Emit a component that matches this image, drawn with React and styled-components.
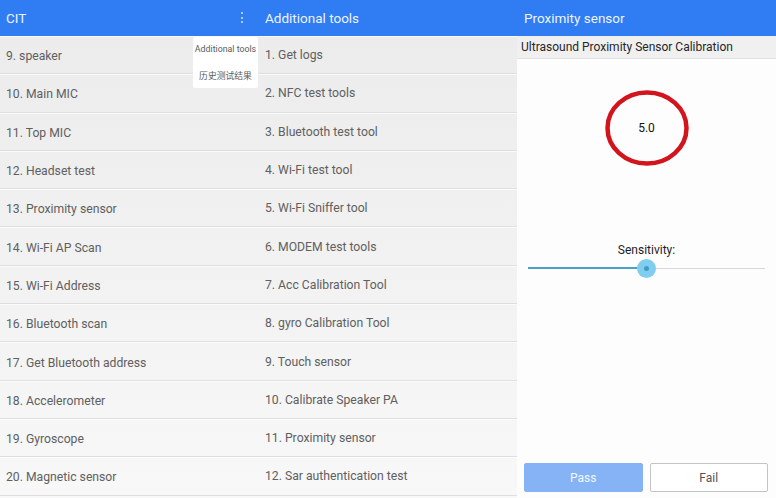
import React from "react";
import styled, { createGlobalStyle } from "styled-components";

const Global = createGlobalStyle`
  html, body { margin: 0; padding: 0; background: #ffffff; }
  body { font-family: Roboto, "Noto Sans", "Noto Sans CJK SC", sans-serif; }
  * { box-sizing: border-box; }
`;

const Screen = styled.div`
  display: flex;
  width: 776px;
  height: 498px;
  overflow: hidden;
`;

const Panel = styled.div`
  position: relative;
  display: flex;
  flex-direction: column;
  width: ${(p) => p.$w}px;
  flex: none;
  background: ${(p) => p.$bg || "#fff"};
`;

const Header = styled.div`
  height: 36px;
  flex: none;
  display: flex;
  align-items: center;
  justify-content: space-between;
  padding: 0 ${(p) => p.$pr || 0}px 1px ${(p) => p.$pl}px;
  background: #2f7cf3;
  color: #eef4ff;
  font-size: 13.5px;
`;

const Dots = styled.div`
  display: flex;
  flex-direction: column;
  gap: 2.5px;
  span {
    width: 2px;
    height: 2px;
    border-radius: 1px;
    background: #d6e4ff;
  }
`;

const List = styled.div`
  flex: 1;
  display: flex;
  flex-direction: column;
  background: linear-gradient(#ececec, #f3f3f3 60%, #f8f8f8);
`;

const Row = styled.div`
  height: 38.3px;
  flex: none;
  display: flex;
  align-items: center;
  padding: ${(p) => (p.$shift ? 1 : 3)}px 0 0 6px;
  font-size: 12.2px;
  color: #606060;
  border-bottom: 1px solid #dfdfdf;
  box-shadow: inset 0 1px 0 rgba(255, 255, 255, 0.7);
`;

const Menu = styled.div`
  position: absolute;
  top: 37px;
  right: 1px;
  width: 65px;
  height: 51px;
  background: #ffffff;
  border-radius: 2px;
  display: flex;
  flex-direction: column;
  justify-content: space-between;
  align-items: center;
  padding: 7px 0 6px;
  font-size: 8.8px;
  color: #5a5a5a;
  font-family: Roboto, "Noto Sans CJK SC", sans-serif;
  white-space: nowrap;
`;

const SubHeader = styled.div`
  height: 23px;
  flex: none;
  display: flex;
  align-items: center;
  padding-left: 4px;
  background: #f0f0f0;
  border-bottom: 1px solid #e2e2e2;
  font-size: 12px;
  color: #262626;
`;

const Content = styled.div`
  flex: 1;
  display: flex;
  flex-direction: column;
  align-items: center;
  background: #fdfdfd;
`;

const ValueBox = styled.div`
  position: relative;
  margin-top: 31px;
  width: 84px;
  height: 76px;
  display: flex;
  align-items: center;
  justify-content: center;
  font-size: 12px;
  color: #111;
  svg {
    position: absolute;
    inset: 0;
  }
`;

const Label = styled.div`
  margin-top: 77px;
  font-size: 12px;
  color: #1e1e1e;
`;

const SliderWrap = styled.div`
  position: relative;
  align-self: stretch;
  margin: 1px 11px 0;
  height: 20px;
`;

const Track = styled.div`
  position: absolute;
  left: 0;
  right: 0;
  top: 9.5px;
  height: 1px;
  background: #d8d8d8;
`;

const Fill = styled.div`
  position: absolute;
  left: 0;
  top: 9px;
  height: 2px;
  background: #4aa3c6;
`;

const Thumb = styled.div`
  position: absolute;
  top: 0.5px;
  width: 19px;
  height: 19px;
  margin-left: -9.5px;
  border-radius: 50%;
  background: #80cdf0;
  display: flex;
  align-items: center;
  justify-content: center;
  &::after {
    content: "";
    width: 5px;
    height: 5px;
    border-radius: 50%;
    background: #3f9cc4;
  }
`;

const Spacer = styled.div`
  flex: 1;
`;

const Buttons = styled.div`
  align-self: stretch;
  display: flex;
  gap: 7px;
  padding: 0 8px 6px 7px;
`;

const Button = styled.div`
  flex: 1;
  height: 29px;
  display: flex;
  align-items: center;
  justify-content: center;
  padding-top: 1px;
  border-radius: 2px;
  font-size: 12px;
  background: ${(p) => (p.$primary ? "#86b2f6" : "#ffffff")};
  color: ${(p) => (p.$primary ? "#f4f8ff" : "#555")};
  border: 1px solid ${(p) => (p.$primary ? "#86b2f6" : "#c4c4c4")};
`;

const leftItems = [
  "9. speaker",
  "10. Main MIC",
  "11. Top MIC",
  "12. Headset test",
  "13. Proximity sensor",
  "14. Wi-Fi AP Scan",
  "15. Wi-Fi Address",
  "16. Bluetooth scan",
  "17. Get Bluetooth address",
  "18. Accelerometer",
  "19. Gyroscope",
  "20. Magnetic sensor",
];

const midItems = [
  "1. Get logs",
  "2. NFC test tools",
  "3. Bluetooth test tool",
  "4. Wi-Fi test tool",
  "5. Wi-Fi Sniffer tool",
  "6. MODEM test tools",
  "7. Acc Calibration Tool",
  "8. gyro Calibration Tool",
  "9. Touch sensor",
  "10. Calibrate Speaker PA",
  "11. Proximity sensor",
  "12. Sar authentication test",
];

export default function App() {
  const sensitivity = 0.5;
  return (
    <>
      <Global />
      <Screen>
        <Panel $w={259}>
          <Header $pl={6} $pr={16}>
            <span>CIT</span>
            <Dots>
              <span />
              <span />
              <span />
            </Dots>
          </Header>
          <List>
            {leftItems.map((t) => (
              <Row key={t}>{t}</Row>
            ))}
          </List>
          <Menu>
            <span>Additional tools</span>
            <span>历史测试结果</span>
          </Menu>
        </Panel>
        <Panel $w={258}>
          <Header $pl={6}>
            <span>Additional tools</span>
          </Header>
          <List>
            {midItems.map((t) => (
              <Row key={t} $shift>
                {t}
              </Row>
            ))}
          </List>
        </Panel>
        <Panel $w={259}>
          <Header $pl={7}>
            <span>Proximity sensor</span>
          </Header>
          <SubHeader>Ultrasound Proximity Sensor Calibration</SubHeader>
          <Content>
            <ValueBox>
              <svg width="84" height="76" viewBox="0 0 84 76">
                <ellipse
                  cx="42"
                  cy="38"
                  rx="39.5"
                  ry="35.5"
                  fill="none"
                  stroke="#d3141d"
                  strokeWidth="4.5"
                />
              </svg>
              <span>5.0</span>
            </ValueBox>
            <Label>Sensitivity:</Label>
            <SliderWrap>
              <Track />
              <Fill style={{ width: `${sensitivity * 100}%` }} />
              <Thumb style={{ left: `${sensitivity * 100}%` }} />
            </SliderWrap>
            <Spacer />
            <Buttons>
              <Button $primary>Pass</Button>
              <Button>Fail</Button>
            </Buttons>
          </Content>
        </Panel>
      </Screen>
    </>
  );
}
